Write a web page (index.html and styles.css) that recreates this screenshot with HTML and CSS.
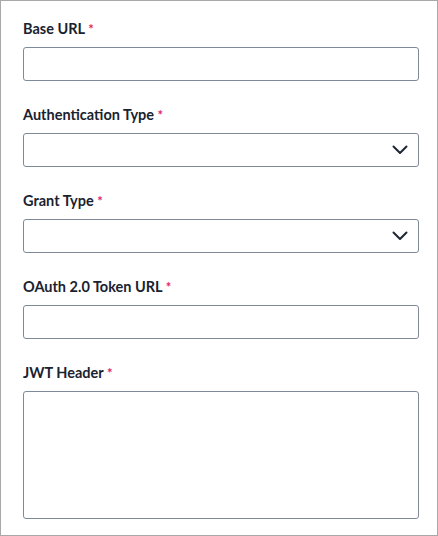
FILE: index.html
```html
<!DOCTYPE html>
<html lang="en">
<head>
  <meta charset="UTF-8" />
  <meta name="viewport" content="width=device-width, initial-scale=1.0" />
  <title>Connection Settings</title>
  <link rel="stylesheet" href="styles.css">
</head>
<body>
  <div class="panel">
    <div class="field">
      <label>Base URL <span class="req">*</span></label>
      <input type="text">
    </div>
    <div class="field">
      <label>Authentication Type <span class="req">*</span></label>
      <div class="select">
        <svg viewBox="0 0 16 10" width="16" height="10"><path d="M1.5 1.5 L8 8 L14.5 1.5" fill="none" stroke="#1d2633" stroke-width="2" stroke-linecap="round" stroke-linejoin="round"/></svg>
      </div>
    </div>
    <div class="field">
      <label>Grant Type <span class="req">*</span></label>
      <div class="select">
        <svg viewBox="0 0 16 10" width="16" height="10"><path d="M1.5 1.5 L8 8 L14.5 1.5" fill="none" stroke="#1d2633" stroke-width="2" stroke-linecap="round" stroke-linejoin="round"/></svg>
      </div>
    </div>
    <div class="field">
      <label>OAuth 2.0 Token URL <span class="req">*</span></label>
      <input type="text">
    </div>
    <div class="field">
      <label>JWT Header <span class="req">*</span></label>
      <textarea></textarea>
    </div>
  </div>
</body>
</html>
```

FILE: styles.css
```css
* {
  margin: 0;
  padding: 0;
  box-sizing: border-box;
}

body {
  font-family: Lato, 'Open Sans', sans-serif;
  background: #ffffff;
  color: #1d2633;
}

.panel {
  width: 438px;
  height: 536px;
  border: 1px solid #a8a8a8;
  padding: 18px 18px 0 22px;
  overflow: hidden;
}

.field {
  display: flex;
  flex-direction: column;
  gap: 8px;
  margin-bottom: 24px;
}

label {
  display: block;
  height: 20px;
  font-size: 14.5px;
  font-weight: 700;
  line-height: 20px;
  color: #1a2230;
}

.req {
  color: #e0245e;
  font-size: 13px;
  line-height: 0;
}

input,
.select,
textarea {
  width: 100%;
  height: 34px;
  border: 1px solid #7f8a98;
  border-radius: 3px;
  background: #fff;
  font-family: inherit;
  font-size: 14px;
}

.select {
  display: flex;
  align-items: center;
  justify-content: flex-end;
  padding-right: 10px;
}

textarea {
  height: 128px;
  resize: none;
}
```
